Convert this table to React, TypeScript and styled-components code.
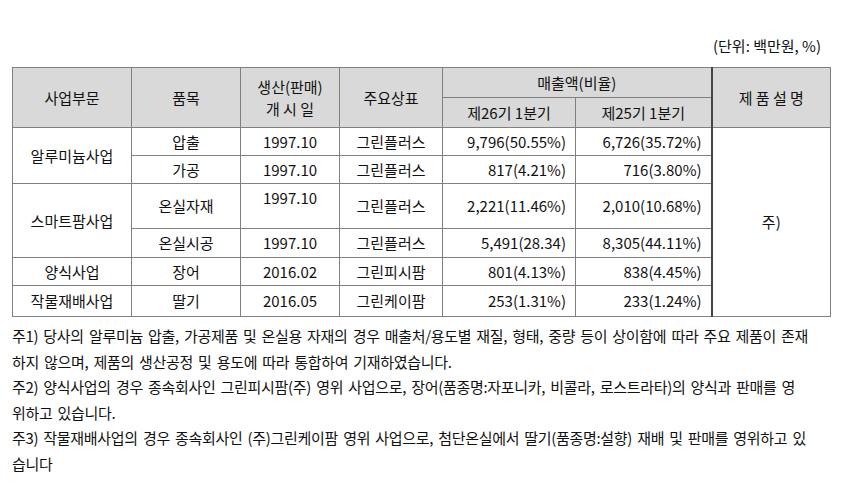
import React from "react";
import styled, { createGlobalStyle } from "styled-components";

const Global = createGlobalStyle`
  html, body { margin: 0; padding: 0; background: #fff; }
  body { font-family: "Noto Sans CJK KR", "Noto Sans", sans-serif; color: #111; }
`;

const Page = styled.div`
  width: 842px;
  padding: 36px 12px 0 12px;
  box-sizing: border-box;
`;

const Unit = styled.div`
  text-align: right;
  font-size: 15px;
  line-height: 20px;
  height: 20px;
  padding-right: 9px;
  margin-bottom: 11px;
`;

const Table = styled.table`
  width: 818px;
  border-collapse: collapse;
  table-layout: fixed;
  border: 1px solid #000;
  font-size: 15px;
`;

const HeadRow = styled.tr`
  height: 30px;
`;

const Row = styled.tr<{ $h: number }>`
  height: ${(p) => p.$h}px;
`;

const Th = styled.th<{ $strongLeft?: boolean }>`
  background: #d9d9d9;
  font-weight: 400;
  border: 1px solid #808080;
  ${(p) => (p.$strongLeft ? "border-left: 2px solid #444;" : "")}
  padding: 0;
  text-align: center;
  vertical-align: middle;
  line-height: 22px;
`;

const Td = styled.td<{ $align?: "center" | "right"; $top?: boolean; $strongTop?: boolean; $strongLeft?: boolean }>`
  border: 1px solid #808080;
  ${(p) => (p.$strongTop ? "border-top: 1px solid #000;" : "")}
  ${(p) => (p.$strongLeft ? "border-left: 2px solid #444;" : "")}
  text-align: ${(p) => p.$align ?? "center"};
  vertical-align: ${(p) => (p.$top ? "top" : "middle")};
  padding: ${(p) => (p.$top ? "4px 0 0 0" : "0")};
  ${(p) => (p.$align === "right" ? "padding-right: 9px;" : "")}
  line-height: 20px;
`;

const Notes = styled.div`
  margin-top: 6px;
  font-size: 15px;
  letter-spacing: -0.3px;
  word-spacing: 2px;
  line-height: 25.6px;
  white-space: nowrap;
`;

const Note = styled.p`
  margin: 0;
`;

export default function App() {
  return (
    <>
      <Global />
      <Page>
        <Unit>(단위: 백만원, %)</Unit>
        <Table>
          <colgroup>
            <col style={{ width: 119 }} />
            <col style={{ width: 109 }} />
            <col style={{ width: 99 }} />
            <col style={{ width: 103 }} />
            <col style={{ width: 133 }} />
            <col style={{ width: 136 }} />
            <col style={{ width: 119 }} />
          </colgroup>
          <thead>
            <HeadRow>
              <Th rowSpan={2}>사업부문</Th>
              <Th rowSpan={2}>품목</Th>
              <Th rowSpan={2}>
                생산(판매)
                <br />개 시 일
              </Th>
              <Th rowSpan={2}>주요상표</Th>
              <Th colSpan={2}>매출액(비율)</Th>
              <Th rowSpan={2} $strongLeft>
                제 품 설 명
              </Th>
            </HeadRow>
            <HeadRow>
              <Th>제26기 1분기</Th>
              <Th>제25기 1분기</Th>
            </HeadRow>
          </thead>
          <tbody>
            <Row $h={28}>
              <Td rowSpan={2}>알루미늄사업</Td>
              <Td>압출</Td>
              <Td>1997.10</Td>
              <Td>그린플러스</Td>
              <Td $align="right">9,796(50.55%)</Td>
              <Td $align="right">6,726(35.72%)</Td>
              <Td rowSpan={6} $strongLeft>
                주)
              </Td>
            </Row>
            <Row $h={28}>
              <Td>가공</Td>
              <Td>1997.10</Td>
              <Td>그린플러스</Td>
              <Td $align="right">817(4.21%)</Td>
              <Td $align="right">716(3.80%)</Td>
            </Row>
            <Row $h={45}>
              <Td rowSpan={2}>스마트팜사업</Td>
              <Td>온실자재</Td>
              <Td $top>1997.10</Td>
              <Td>그린플러스</Td>
              <Td $align="right">2,221(11.46%)</Td>
              <Td $align="right">2,010(10.68%)</Td>
            </Row>
            <Row $h={29}>
              <Td $strongTop>온실시공</Td>
              <Td $strongTop>1997.10</Td>
              <Td $strongTop>그린플러스</Td>
              <Td $strongTop $align="right">5,491(28.34)</Td>
              <Td $strongTop $align="right">8,305(44.11%)</Td>
            </Row>
            <Row $h={28}>
              <Td>양식사업</Td>
              <Td>장어</Td>
              <Td>2016.02</Td>
              <Td>그린피시팜</Td>
              <Td $align="right">801(4.13%)</Td>
              <Td $align="right">838(4.45%)</Td>
            </Row>
            <Row $h={31}>
              <Td>작물재배사업</Td>
              <Td>딸기</Td>
              <Td>2016.05</Td>
              <Td>그린케이팜</Td>
              <Td $align="right">253(1.31%)</Td>
              <Td $align="right">233(1.24%)</Td>
            </Row>
          </tbody>
        </Table>
        <Notes>
          <Note>
            주1) 당사의 알루미늄 압출, 가공제품 및 온실용 자재의 경우 매출처/용도별 재질, 형태, 중량 등이 상이함에 따라 주요 제품이 존재
            <br />
            하지 않으며, 제품의 생산공정 및 용도에 따라 통합하여 기재하였습니다.
          </Note>
          <Note>
            주2) 양식사업의 경우 종속회사인 그린피시팜(주) 영위 사업으로, 장어(품종명:자포니카, 비콜라, 로스트라타)의 양식과 판매를 영
            <br />
            위하고 있습니다.
          </Note>
          <Note>
            주3) 작물재배사업의 경우 종속회사인 (주)그린케이팜 영위 사업으로, 첨단온실에서 딸기(품종명:설향) 재배 및 판매를 영위하고 있
            <br />
            습니다
          </Note>
        </Notes>
      </Page>
    </>
  );
}
